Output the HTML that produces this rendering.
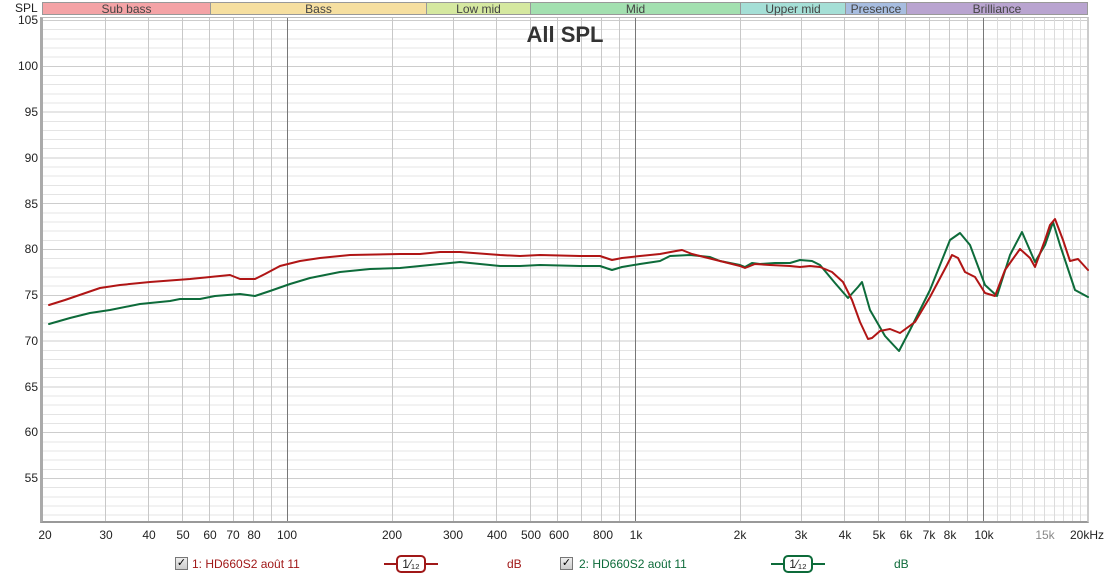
<!DOCTYPE html>
<html><head><meta charset="utf-8"><style>
body{margin:0;width:1110px;height:579px;background:#fff;font-family:"Liberation Sans",sans-serif;overflow:hidden;position:relative}
.t{position:absolute;font-size:12px;color:#222;white-space:nowrap}
.yl{position:absolute;right:1072px;font-size:12px;color:#222}
.xl{position:absolute;top:528px;font-size:12px;color:#222;transform:translateX(-50%)}
.band{position:absolute;top:2px;height:13px;font-size:12px;line-height:13px;text-align:center;color:#444;border:1px solid #999;box-sizing:border-box}
.cb{position:absolute;top:557px;width:11px;height:11px;border:1px solid #777;background:linear-gradient(#eee,#ccc);font-size:11px;line-height:11px;text-align:center;color:#000}
</style></head><body>
<div class="t" style="left:15px;top:1px">SPL</div>
<div class="band" style="left:42px;width:169px;background:#f4a3a6">Sub bass</div>
<div class="band" style="left:210px;width:217px;background:#f6dfa0">Bass</div>
<div class="band" style="left:426px;width:105px;background:#d5e8a0">Low mid</div>
<div class="band" style="left:530px;width:211px;background:#a3e0b0">Mid</div>
<div class="band" style="left:740px;width:106px;background:#a5dfd6">Upper mid</div>
<div class="band" style="left:845px;width:62px;background:#a7bde0">Presence</div>
<div class="band" style="left:906px;width:182px;background:#b9a4d0">Brilliance</div>
<div style="position:absolute;left:40px;top:17px;width:1049px;height:506px;border-left:3px solid #aaa;border-top:1px solid #bbb;border-bottom:2px solid #999;border-right:2px solid #ccc;box-sizing:border-box;background:repeating-linear-gradient(to bottom,#cdcdcd 0,#cdcdcd 1px,transparent 1px,transparent 45.8px) 0 2px,repeating-linear-gradient(to bottom,#e4e4e4 0,#e4e4e4 1px,transparent 1px,transparent 9.16px) 0 2px"></div>
<svg style="position:absolute;left:0;top:0" width="1110" height="579">
<g stroke="#c8c8c8" stroke-width="1">
<path d="M105.5 18V521M148.5 18V521M182.5 18V521M209.5 18V521M233.5 18V521M253.5 18V521M271.5 18V521M392.5 18V521M453.5 18V521M496.5 18V521M530.5 18V521M557.5 18V521M581.5 18V521M601.5 18V521M619.5 18V521M740.5 18V521M801.5 18V521M844.5 18V521M878.5 18V521M905.5 18V521M929.5 18V521M949.5 18V521M967.5 18V521"/>
<path stroke="#dcdcdc" d="M997.5 18V521M1010.5 18V521M1022.5 18V521M1034.5 18V521M1044.5 18V521M1054.5 18V521M1063.5 18V521M1072.5 18V521M1080.5 18V521"/>
<path stroke="#777" d="M287.5 18V521M635.5 18V521M983.5 18V521"/>
</g>
<text x="565" y="42" font-family="Liberation Sans" font-weight="bold" font-size="22" fill="#333" text-anchor="middle">All SPL</text>
<g fill="none" stroke-width="2" stroke-linejoin="round" stroke-linecap="round">
<polyline stroke="#0d6b3a" points="49,324 70,318 90,313 110,310 140,304 160,302 170,301 180,299 200,299 215,296 240,294 255,296 270,291 290,284 310,278 340,272 370,269 400,268 420,266 440,264 460,262 500,266 520,266 540,265 580,266 600,266 612,270 622,267 640,264 660,261 670,256 690,255 710,257 720,261 740,265 745,267 752,263 760,264 775,263 790,263 800,260 812,261 820,265 835,283 848,298 858,287 862,282 870,310 885,336 899,351 910,330 930,290 950,240 960,233 970,245 985,285 997,296 1010,255 1022,232 1035,262 1045,245 1053,222 1060,245 1075,290 1088,297"/>
<polyline stroke="#b01515" points="49,305 65,300 100,288 120,285 150,282 190,279 220,276 230,275 240,279 255,279 265,274 280,266 300,261 320,258 350,255 400,254 420,254 440,252 460,252 500,255 520,256 540,255 580,256 600,256 612,260 622,258 640,256 660,254 676,251 682,250 692,254 700,256 720,261 740,266 745,268 755,264 770,265 790,266 800,267 810,266 820,267 832,272 843,282 852,300 860,322 868,339 872,338 880,331 890,329 900,333 915,322 930,297 947,265 952,255 958,258 965,272 975,277 985,293 995,296 1005,270 1020,249 1030,258 1035,267 1045,240 1050,225 1055,219 1063,240 1070,261 1078,259 1088,270"/>
</g>
</svg>
<div class="yl" style="top:13px">105</div><div class="yl" style="top:59px">100</div><div class="yl" style="top:105px">95</div><div class="yl" style="top:151px">90</div><div class="yl" style="top:197px">85</div><div class="yl" style="top:242px">80</div><div class="yl" style="top:288px">75</div><div class="yl" style="top:334px">70</div><div class="yl" style="top:380px">65</div><div class="yl" style="top:425px">60</div><div class="yl" style="top:471px">55</div>
<div class="xl" style="left:45px">20</div><div class="xl" style="left:106px">30</div><div class="xl" style="left:149px">40</div><div class="xl" style="left:183px">50</div><div class="xl" style="left:210px">60</div><div class="xl" style="left:233px">70</div><div class="xl" style="left:254px">80</div><div class="xl" style="left:287px">100</div><div class="xl" style="left:392px">200</div><div class="xl" style="left:453px">300</div><div class="xl" style="left:497px">400</div><div class="xl" style="left:531px">500</div><div class="xl" style="left:559px">600</div><div class="xl" style="left:603px">800</div><div class="xl" style="left:636px">1k</div><div class="xl" style="left:740px">2k</div><div class="xl" style="left:801px">3k</div><div class="xl" style="left:845px">4k</div><div class="xl" style="left:879px">5k</div><div class="xl" style="left:906px">6k</div><div class="xl" style="left:929px">7k</div><div class="xl" style="left:950px">8k</div><div class="xl" style="left:984px">10k</div><div class="xl" style="left:1045px;color:#888">15k</div><div class="xl" style="left:1087px">20kHz</div>
<div class="cb" style="left:175px">✓</div>
<div class="t" style="left:192px;top:557px;color:#a01818">1: HD660S2 août 11</div>
<svg style="position:absolute;left:383px;top:554px" width="56" height="20"><path d="M1 10H14M42 10H55" stroke="#a01818" stroke-width="2"/><rect x="14" y="2" width="28" height="16" rx="4" fill="#fff" stroke="#a01818" stroke-width="2"/><text x="28" y="14" font-family="Liberation Sans" font-size="12" fill="#222" text-anchor="middle">1⁄₁₂</text></svg>
<div class="t" style="left:507px;top:557px;color:#a01818">dB</div>
<div class="cb" style="left:560px">✓</div>
<div class="t" style="left:579px;top:557px;color:#0d6b3a">2: HD660S2 août 11</div>
<svg style="position:absolute;left:770px;top:554px" width="56" height="20"><path d="M1 10H14M42 10H55" stroke="#0d6b3a" stroke-width="2"/><rect x="14" y="2" width="28" height="16" rx="4" fill="#fff" stroke="#0d6b3a" stroke-width="2"/><text x="28" y="14" font-family="Liberation Sans" font-size="12" fill="#222" text-anchor="middle">1⁄₁₂</text></svg>
<div class="t" style="left:894px;top:557px;color:#0d6b3a">dB</div>
</body></html>
